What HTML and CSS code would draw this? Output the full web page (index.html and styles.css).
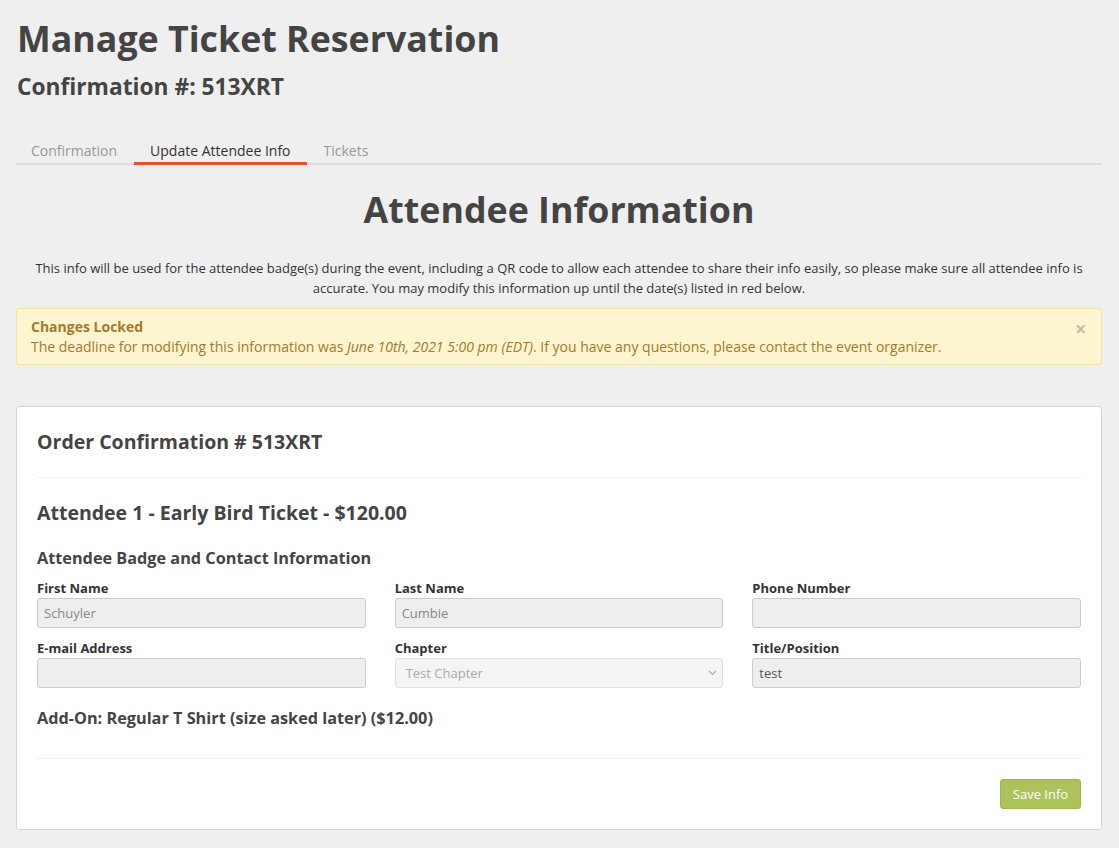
FILE: index.html
```html
<!DOCTYPE html>
<html>
<head>
<meta charset="utf-8">
<link rel="stylesheet" href="styles.css">
</head>
<body>
<div class="page">
  <h1 class="title">Manage Ticket Reservation</h1>
  <h2 class="subtitle">Confirmation #: 513XRT</h2>
  <ul class="tabs">
    <li class="tab">Confirmation</li>
    <li class="tab active">Update Attendee Info</li>
    <li class="tab">Tickets</li>
  </ul>
  <h1 class="section-title">Attendee Information</h1>
  <p class="intro">This info will be used for the attendee badge(s) during the event, including a QR code to allow each attendee to share their info easily, so please make sure all attendee info is accurate. You may modify this information up until the date(s) listed in red below.</p>
  <div class="alert">
    <span class="alert-close">×</span>
    <strong class="alert-title">Changes Locked</strong>
    <div>The deadline for modifying this information was <em>June 10th, 2021 5:00 pm (EDT)</em>. If you have any questions, please contact the event organizer.</div>
  </div>
  <div class="card">
    <h3 class="order">Order Confirmation # 513XRT</h3>
    <hr class="rule">
    <h3 class="attendee">Attendee 1 - Early Bird Ticket - $120.00</h3>
    <h4 class="badge-title">Attendee Badge and Contact Information</h4>
    <div class="grid">
      <div class="field">
        <label class="label">First Name</label>
        <div class="input">Schuyler</div>
      </div>
      <div class="field">
        <label class="label">Last Name</label>
        <div class="input">Cumbie</div>
      </div>
      <div class="field">
        <label class="label">Phone Number</label>
        <div class="input"></div>
      </div>
      <div class="field">
        <label class="label">E-mail Address</label>
        <div class="input"></div>
      </div>
      <div class="field">
        <label class="label">Chapter</label>
        <div class="input select"><span class="select-text">Test Chapter</span>
          <svg class="chev" width="9" height="6" viewBox="0 0 9 6"><path d="M1 1 L4.5 4.5 L8 1" fill="none" stroke="#aaa" stroke-width="1.2"/></svg>
        </div>
      </div>
      <div class="field">
        <label class="label">Title/Position</label>
        <div class="input dark">test</div>
      </div>
    </div>
    <h4 class="addon">Add-On: Regular T Shirt (size asked later) ($12.00)</h4>
    <hr class="rule rule-bottom">
    <div class="actions">
      <button class="btn">Save Info</button>
    </div>
  </div>
</div>
</body>
</html>
```

FILE: styles.css
```css
* { box-sizing: border-box; }
html, body { margin: 0; padding: 0; }
body {
  background: #efefef;
  font-family: "Open Sans", "Liberation Sans", sans-serif;
  color: #333;
  font-size: 13px;
}
.page {
  padding: 16px 17px 18px 16px;
}
.title {
  margin: 0;
  font-size: 35.75px;
  line-height: 44px;
  font-weight: 700;
  color: #444;
  padding-left: 1px;
}
.subtitle {
  margin: 12px 0 0;
  font-size: 22.75px;
  line-height: 30px;
  font-weight: 700;
  color: #444;
  padding-left: 1px;
}
.tabs {
  list-style: none;
  margin: 39px 0 0;
  padding: 0;
  display: flex;
  border-bottom: 2px solid #dcdcdc;
}
.tab {
  padding: 0 15px 1px;
  margin-right: 2px;
  font-size: 14px;
  line-height: 20px;
  color: #999;
  margin-bottom: -2px;
  border-bottom: 3px solid transparent;
}
.tab.active {
  color: #333;
  padding: 0 16px 1px;
  border-bottom-color: #dd5533;
}
.section-title {
  margin: 22px 0 0;
  text-align: center;
  font-size: 35.75px;
  line-height: 44px;
  font-weight: 700;
  color: #444;
}
.intro {
  margin: 27px 0 0;
  text-align: center;
  font-size: 13px;
  line-height: 20px;
  color: #333;
  padding: 0 8px;
}
.alert {
  position: relative;
  margin-top: 10px;
  background: #fcf5d0;
  border: 1px solid #f3e2a6;
  border-radius: 3px;
  padding: 8px 14px 7px;
  color: #a8782b;
  font-size: 14px;
  line-height: 20px;
}
.alert-title { display: block; font-weight: 700; }
.alert-close {
  position: absolute;
  right: 15px;
  top: 10px;
  color: #c2bda8;
  font-size: 19px;
  font-weight: 700;
  line-height: 20px;
}
.card {
  margin-top: 41px;
  background: #fff;
  border: 1px solid #d6d6d6;
  border-radius: 3px;
  padding: 20px 20px 20px;
}
.order {
  margin: 0;
  font-size: 19.5px;
  line-height: 30px;
  font-weight: 700;
  color: #444;
}
.rule {
  border: 0;
  border-top: 1px solid #eee;
  margin: 20px 0 0;
}
.attendee {
  margin: 20px 0 0;
  font-size: 19.5px;
  line-height: 30px;
  font-weight: 700;
  color: #444;
}
.badge-title {
  margin: 18px 0 0;
  font-size: 16.25px;
  line-height: 24px;
  font-weight: 700;
  color: #444;
}
.grid {
  margin-top: 8px;
  display: grid;
  grid-template-columns: 1fr 1fr 1fr;
  column-gap: 29px;
  row-gap: 10px;
}
.field { display: flex; flex-direction: column; }
.label {
  font-size: 13px;
  line-height: 20px;
  font-weight: 700;
  color: #333;
}
.input {
  height: 30px;
  background: #eee;
  border: 1px solid #cdcdcd;
  border-radius: 3px;
  padding: 0 6px;
  font-size: 13px;
  line-height: 28px;
  color: #888;
}
.input.dark { color: #555; }
.select {
  display: flex;
  align-items: center;
  justify-content: space-between;
  background: #f4f4f4;
  border-color: #e0e0e0;
  padding: 0 5px 0 10px;
  color: #aaa;
}
.chev { display: block; }
.addon {
  margin: 18px 0 0;
  font-size: 16.25px;
  line-height: 24px;
  font-weight: 700;
  color: #444;
}
.rule-bottom { margin-top: 28px; }
.actions {
  display: flex;
  justify-content: flex-end;
  margin-top: 20px;
}
.btn {
  display: block;
  font-family: "Open Sans", "Liberation Sans", sans-serif;
  font-size: 13px;
  line-height: 20px;
  color: #fff;
  background: #adc25a;
  border: 1px solid #9fb34e;
  border-radius: 3px;
  height: 30px;
  width: 81px;
  padding: 0;
  cursor: pointer;
}
```
